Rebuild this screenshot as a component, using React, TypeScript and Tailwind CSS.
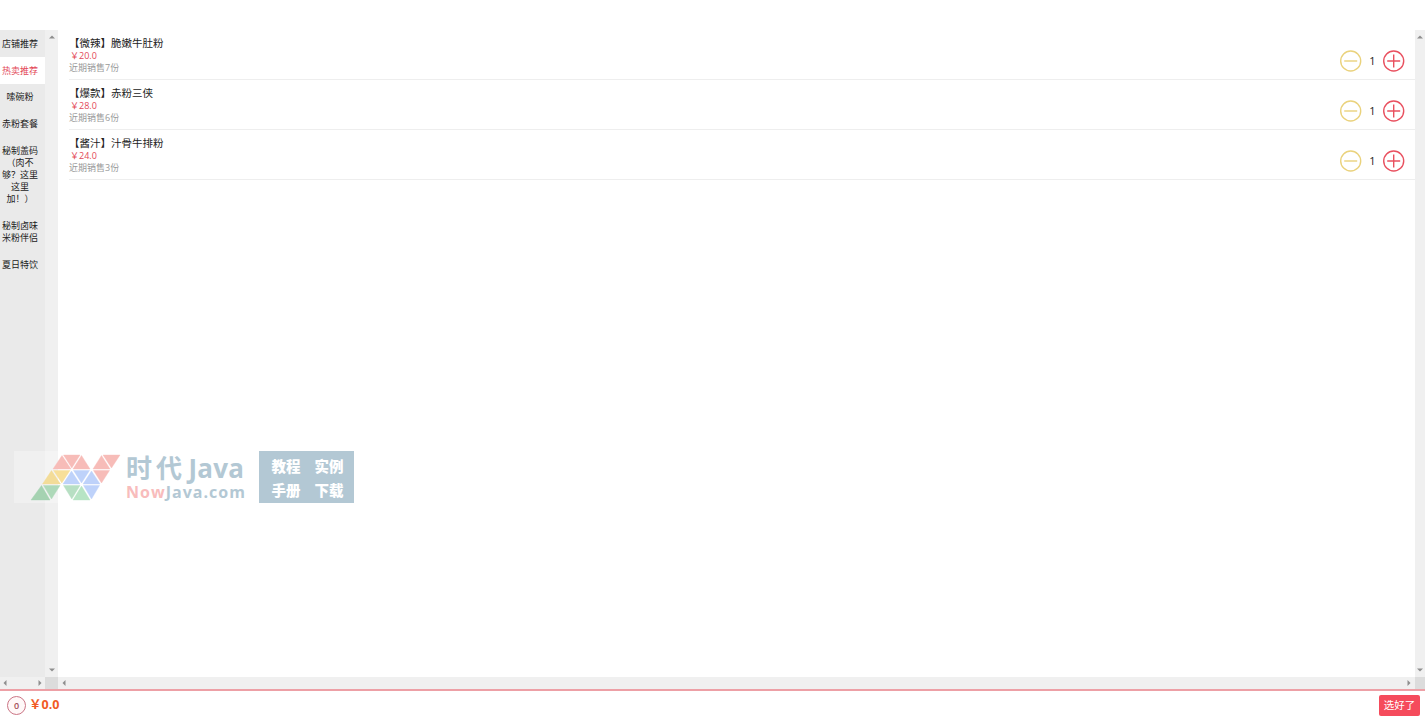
import { useState } from "react";

const categories = [
  ["店铺推荐"],
  ["热卖推荐"],
  ["嗦碗粉"],
  ["赤粉套餐"],
  ["秘制盖码", "（肉不", "够？这里", "这里", "加！）"],
  ["秘制卤味", "米粉伴侣"],
  ["夏日特饮"],
];

const dishes = [
  { name: "【微辣】脆嫩牛肚粉", price: "20.0", sold: 7 },
  { name: "【爆款】赤粉三侠", price: "28.0", sold: 6 },
  { name: "【酱汁】汁骨牛排粉", price: "24.0", sold: 3 },
];

const logoTriangles = [
  { points: "53,469 62,455.5 71,469", fill: "#f7bcb8" },
  { points: "63.5,455 80,455 71.8,468", fill: "#f7bcb8" },
  { points: "73,469 81.5,455.5 90,469", fill: "#f7bcb8" },
  { points: "93,469 101.5,455.5 110,469", fill: "#f7bcb8" },
  { points: "103,455 120,455 111.5,468", fill: "#f7bcb8" },
  { points: "42.5,484 51.5,470.5 60.5,484", fill: "#f3dc98" },
  { points: "53.5,470.5 70,470.5 61.8,483", fill: "#f7df99" },
  { points: "63,484 71.5,471 80,484", fill: "#bed2fa" },
  { points: "73.5,470.5 89.5,470.5 81.5,483", fill: "#bed2fa" },
  { points: "83,484 91.5,471 100,484", fill: "#bed2fa" },
  { points: "93.5,470.5 109.5,470.5 101.5,483", fill: "#f7bcb8" },
  { points: "31,500 41.5,485.5 50,500", fill: "#a5d2b1" },
  { points: "43.5,485.5 60,485.5 51.5,499", fill: "#aed9b9" },
  { points: "63.5,485.5 80,485.5 71.8,499", fill: "#b7dfc3" },
  { points: "73,500 81.5,486 90,500", fill: "#b7e4c4" },
  { points: "83.5,485.5 99.5,485.5 91.5,499", fill: "#bed2fa" },
];

type Direction = "up" | "down" | "left" | "right";

const arrowPaths: Record<Direction, string> = {
  up: "M0 4.5L3 1.5L6 4.5Z",
  down: "M0 1.5L3 4.5L6 1.5Z",
  left: "M4.5 0L1.5 3L4.5 6Z",
  right: "M1.5 0L4.5 3L1.5 6Z",
};

function Arrow({ dir }: { dir: Direction }) {
  return (
    <svg className="w-1.5 h-1.5 shrink-0" viewBox="0 0 6 6">
      <path d={arrowPaths[dir]} fill="#8e8e8e" />
    </svg>
  );
}

function VerticalBar({ className }: { className: string }) {
  return (
    <div className={`shrink-0 bg-[#f0f0f0] flex flex-col items-center justify-between pt-1 pb-1 ${className}`}>
      <Arrow dir="up" />
      <Arrow dir="down" />
    </div>
  );
}

function RoundButton({ plus = false, onClick }: { plus?: boolean; onClick: () => void }) {
  return (
    <button onClick={onClick} className={plus ? "text-[#e9505f]" : "text-[#ead27c]"}>
      <svg className="w-[22px] h-[22px] block" viewBox="0 0 22 22" fill="none" stroke="currentColor" strokeWidth="1.4">
        <circle cx="10.7" cy="11" r="10" />
        <path d={plus ? "M4.2 11H17.2M10.7 4.5V17.5" : "M4.2 11H17.2"} />
      </svg>
    </button>
  );
}

function DishRow({ name, price, sold }: { name: string; price: string; sold: number }) {
  const [count, setCount] = useState(1);

  return (
    <div className="h-[50px] ml-[11px] border-b border-[#eeeeee] flex justify-between">
      <div className="pt-[7px]">
        <div className="text-[10.5px] leading-[13px] text-[#222] whitespace-nowrap">{name}</div>
        <div className="text-[9px] leading-3 text-[#e34857] pl-px">￥{price}</div>
        <div className="text-[9px] leading-3 text-[#999]">近期销售{sold}份</div>
      </div>
      <div className="flex items-center h-[22px] mt-5 mr-[10px]">
        <RoundButton onClick={() => setCount(Math.max(0, count - 1))} />
        <span className="w-[21px] pb-0.5 text-center text-[11px] leading-none text-[#222]">{count}</span>
        <RoundButton plus onClick={() => setCount(count + 1)} />
      </div>
    </div>
  );
}

function Watermark() {
  return (
    <div className="absolute left-[14px] top-[451px] w-[340px] h-[52px] bg-white/30 pointer-events-none">
      <svg className="w-full h-full block" viewBox="14 451 340 52">
        {logoTriangles.map((t) => (
          <polygon key={t.points} points={t.points} fill={t.fill} stroke={t.fill} strokeWidth="0.4" />
        ))}
        <g fontWeight="700" fill="#b3c8d4">
          <text x="126" y="478" fontSize="26" textLength="56">时代</text>
          <text x="188.5" y="478" fontSize="26" textLength="55.5">Java</text>
          <text x="126" y="498" fontSize="16" textLength="119">
            <tspan fill="#f8bcbc">Now</tspan>Java.com
          </text>
        </g>
        <rect x="259" y="451" width="95" height="52" fill="#b3c8d4" />
        <g fontWeight="900" fontSize="14.5" fill="#fff">
          <text x="271.5" y="472">教程</text>
          <text x="314.5" y="472">实例</text>
          <text x="271.5" y="495.5">手册</text>
          <text x="314.5" y="495.5">下载</text>
        </g>
      </svg>
    </div>
  );
}

export default function App() {
  const [active, setActive] = useState(1);

  return (
    <div className="relative w-full h-[718px] pt-[30px] flex flex-col bg-white overflow-hidden font-['Open_Sans','Noto_Sans_CJK_SC',sans-serif]">
      <div className="flex h-[647px]">
        {/* Category menu */}
        <div className="w-[45px] shrink-0 bg-[#eaeaea]">
          {categories.map((lines, i) => (
            <div
              key={lines[0]}
              onClick={() => setActive(i)}
              className={`pt-[7.9px] pb-[6.9px] pr-[5px] text-center text-[9px] leading-3 whitespace-nowrap ${
                i === active ? "bg-white text-[#e34857]" : "text-[#222]"
              }`}
            >
              {lines.map((line) => (
                <div key={line}>{line}</div>
              ))}
            </div>
          ))}
        </div>
        <VerticalBar className="w-[13px]" />

        {/* Dishes */}
        <div className="flex-1">
          {dishes.map((dish) => (
            <DishRow key={dish.name} {...dish} />
          ))}
        </div>
        <VerticalBar className="w-[10px]" />
      </div>

      <div className="flex h-3 bg-[#f0f0f0]">
        <div className="w-[45px] px-0.5 flex items-center justify-between">
          <Arrow dir="left" />
          <Arrow dir="right" />
        </div>
        <div className="w-[13px] bg-[#dcdcdc]" />
        <div className="flex-1 px-[3px] flex items-center justify-between">
          <Arrow dir="left" />
          <Arrow dir="right" />
        </div>
        <div className="w-[10px] bg-[#dcdcdc]" />
      </div>

      {/* Cart */}
      <div className="flex-1 border-t-2 border-[#eda0a6] flex items-center justify-between pt-px pl-[7px] pr-[5px]">
        <div className="flex items-center gap-[3px]">
          <div className="w-[19px] h-[19px] rounded-full border border-[#cb7585] bg-[#fff8f8] flex items-center justify-center text-[9px] font-semibold leading-none text-[#a34e56]">
            0
          </div>
          <div className="text-[12.5px] font-bold leading-none text-[#f15a24]">￥0.0</div>
        </div>
        <button className="w-[41px] h-[21px] rounded-xs bg-[#f54b5c] text-white text-[10.5px] leading-none whitespace-nowrap">
          选好了
        </button>
      </div>

      <Watermark />
    </div>
  );
}
